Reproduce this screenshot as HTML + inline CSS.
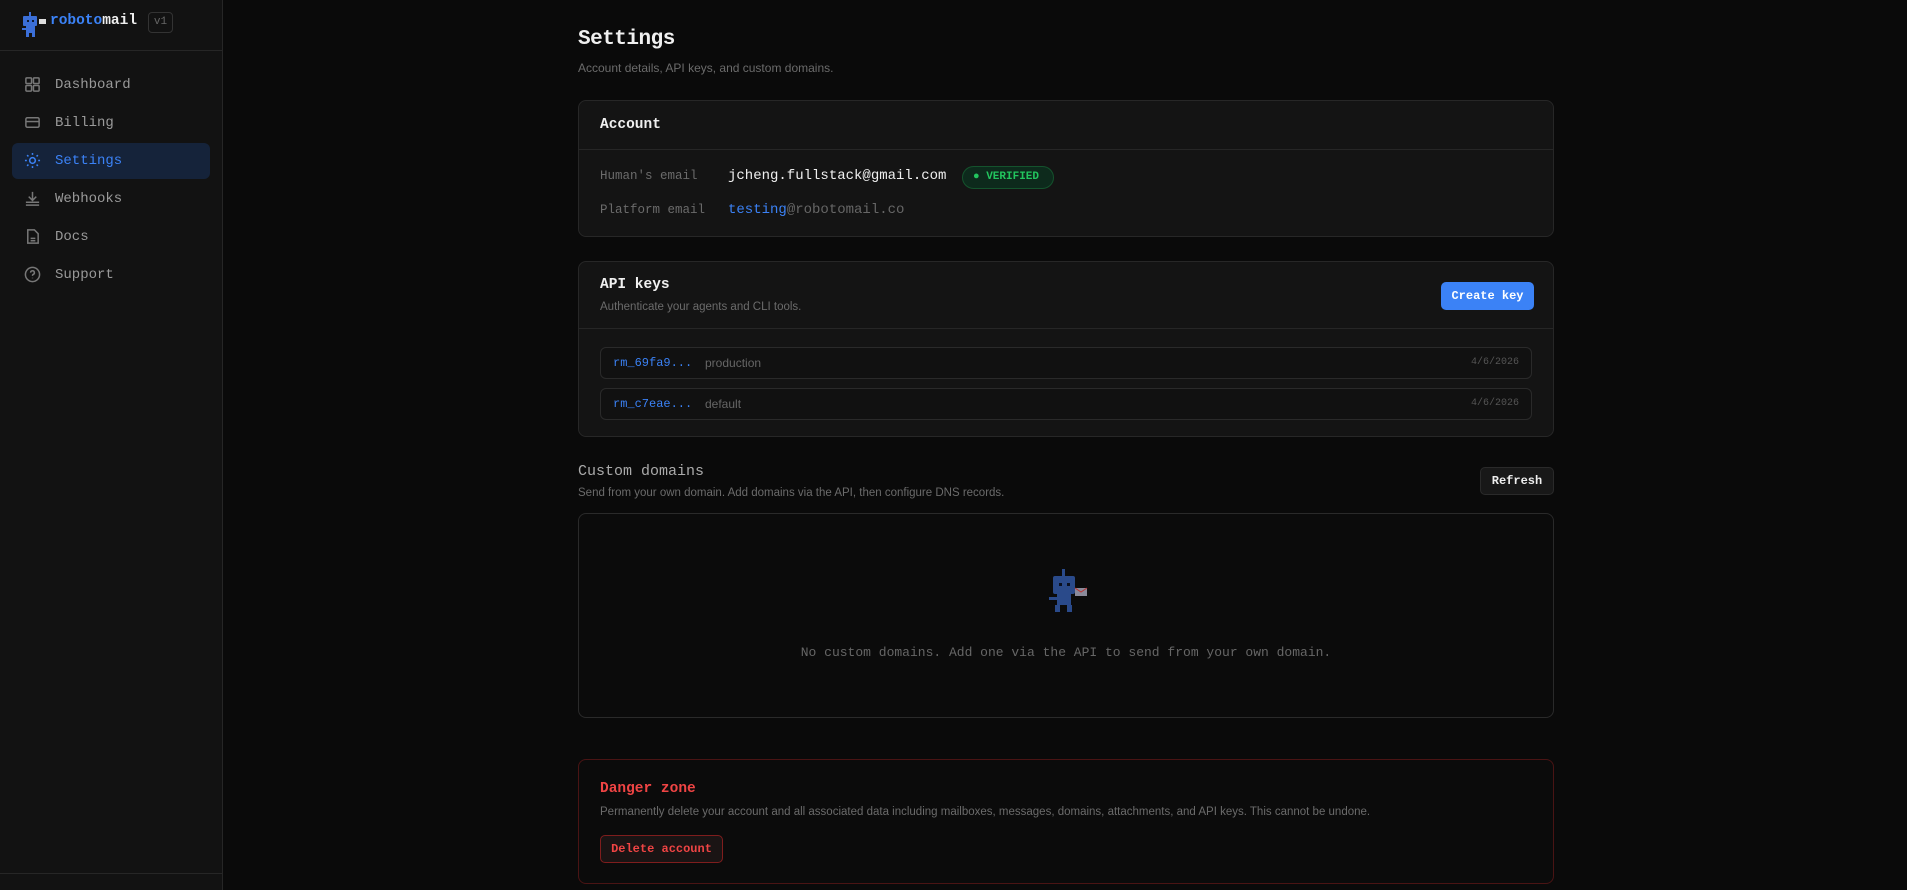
<!DOCTYPE html>
<html><head><meta charset="utf-8"><style>
*{box-sizing:border-box;margin:0;padding:0}
body{width:1907px;height:890px;background:#0a0a0a;font-family:"Liberation Mono",monospace;color:#e5e5e5;position:relative;overflow:hidden}
.a{position:absolute}
.sans{font-family:"Liberation Sans",sans-serif}
#side{left:0;top:0;width:223px;height:890px;background:#121212;border-right:1px solid #262626}
.nav{position:absolute;left:24px;font-size:14px;color:#9a9a9a;display:flex;align-items:center;gap:14px}
.nav svg{width:17px;height:17px}
.card{position:absolute;left:578px;width:976px;background:#141414;border:1px solid #272727;border-radius:8px}
.lbl{font-size:12.5px;color:#6b6b6b}
.row{position:absolute;left:21px;right:21px;height:32px;border:1px solid #2a2a2a;border-radius:6px;background:#111}
</style></head><body>
<div id="side" class="a">
 <svg class="a" style="left:20px;top:12px" width="28" height="26" viewBox="0 0 28 26"><rect x="9" y="0" width="2" height="4" fill="#3b6fd8"/><rect x="3" y="4" width="14" height="10" rx="1" fill="#3b6fd8"/><rect x="7" y="8" width="2" height="2" fill="#0d1a33"/><rect x="12" y="8" width="2" height="2" fill="#0d1a33"/><rect x="6" y="14" width="9" height="7" fill="#3b6fd8"/><rect x="2" y="16" width="4" height="2" fill="#3b6fd8"/><rect x="6" y="21" width="3" height="4" fill="#3b6fd8"/><rect x="12" y="21" width="3" height="4" fill="#3b6fd8"/><rect x="19" y="7" width="7" height="5" fill="#ddd"/></svg>
 <div class="a" style="left:50px;top:13px;font-size:14.5px;font-weight:bold"><span style="color:#3b82f6">roboto</span><span style="color:#eee">mail</span></div>
 <div class="a" style="left:148px;top:12px;width:25px;height:21px;border:1px solid #333;border-radius:4px;font-size:11px;color:#666;text-align:center;line-height:19px">v1</div>
 <div class="a" style="left:0;top:50px;width:223px;height:1px;background:#262626"></div>
 <div class="a" style="left:12px;top:143px;width:198px;height:36px;background:#15233a;border-radius:6px"></div>
 <div class="nav" style="top:76px"><svg viewBox="0 0 18 18" fill="none" stroke="#777" stroke-width="1.6"><rect x="2" y="2" width="6" height="6" rx="1"/><rect x="10" y="2" width="6" height="6" rx="1"/><rect x="2" y="10" width="6" height="6" rx="1"/><rect x="10" y="10" width="6" height="6" rx="1"/></svg>Dashboard</div>
 <div class="nav" style="top:114px"><svg viewBox="0 0 18 18" fill="none" stroke="#777" stroke-width="1.6"><rect x="2" y="4" width="14" height="10" rx="1.5"/><line x1="2" y1="8" x2="16" y2="8"/></svg>Billing</div>
 <div class="nav" style="top:152px;color:#3b82f6"><svg viewBox="0 0 18 18" fill="none" stroke="#3b82f6" stroke-width="1.6"><circle cx="9" cy="9" r="3"/><path d="M9 1v2M9 15v2M1 9h2M15 9h2M3.3 3.3l1.4 1.4M13.3 13.3l1.4 1.4M3.3 14.7l1.4-1.4M13.3 4.7l1.4-1.4"/></svg>Settings</div>
 <div class="nav" style="top:190px"><svg viewBox="0 0 18 18" fill="none" stroke="#777" stroke-width="1.6"><path d="M9 2v9M5 7l4 4 4-4M2 13h14M2 16h14"/></svg>Webhooks</div>
 <div class="nav" style="top:228px"><svg viewBox="0 0 18 18" fill="none" stroke="#777" stroke-width="1.6"><path d="M4 2h7l4 4v10H4z"/><path d="M7 11h5M7 13.5h5"/></svg>Docs</div>
 <div class="nav" style="top:266px"><svg viewBox="0 0 18 18" fill="none" stroke="#777" stroke-width="1.6"><circle cx="9" cy="9" r="7.5"/><path d="M7 7a2 2 0 1 1 2.5 2c-.5.2-.5.8-.5 1.5M9 12.5v.5"/></svg>Support</div>
 <div class="a" style="left:0;top:873px;width:223px;height:1px;background:#262626"></div>
</div>

<div class="a" style="left:578px;top:28px;font-size:21px;font-weight:bold;color:#f0f0f0;letter-spacing:-0.5px">Settings</div>
<div class="a sans" style="left:578px;top:61px;font-size:12px;color:#6b6b6b">Account details, API keys, and custom domains.</div>

<div class="card" style="top:100px;height:137px">
 <div class="a" style="left:21px;top:16px;font-size:14.5px;font-weight:bold;color:#f0f0f0">Account</div>
 <div class="a" style="left:0;right:0;top:48px;height:1px;background:#262626"></div>
 <div class="a lbl" style="left:21px;top:68px">Human's email</div>
 <div class="a" style="left:149px;top:67px;font-size:14px;color:#f0f0f0">jcheng.fullstack@gmail.com</div>
 <div class="a" style="left:383px;top:65px;width:92px;height:23px;border:1px solid #14532d;background:#0d2a1c;border-radius:12px;font-size:11px;color:#22c55e;line-height:21px;padding-left:10px;font-weight:bold">● VERIFIED</div>
 <div class="a lbl" style="left:21px;top:102px">Platform email</div>
 <div class="a" style="left:149px;top:101px;font-size:14px;color:#666"><span style="color:#3b82f6">testing</span>@robotomail.co</div>
</div>

<div class="card" style="top:261px;height:176px">
 <div class="a" style="left:21px;top:15px;font-size:14.5px;font-weight:bold;color:#f0f0f0">API keys</div>
 <div class="a sans" style="left:21px;top:39px;font-size:11.5px;color:#6b6b6b">Authenticate your agents and CLI tools.</div>
 <div class="a" style="left:862px;top:20px;width:93px;height:28px;background:#3b82f6;border-radius:5px;color:#fff;font-size:12px;font-weight:bold;text-align:center;line-height:28px">Create key</div>
 <div class="a" style="left:0;right:0;top:66px;height:1px;background:#262626"></div>
 <div class="row" style="top:85px"><span class="a" style="left:12px;top:8px;font-size:12px;color:#3b82f6">rm_69fa9...</span><span class="a sans" style="left:104px;top:8px;font-size:12px;color:#666">production</span><span class="a" style="right:12px;top:9px;font-size:10px;color:#555">4/6/2026</span></div>
 <div class="row" style="top:126px"><span class="a" style="left:12px;top:8px;font-size:12px;color:#3b82f6">rm_c7eae...</span><span class="a sans" style="left:104px;top:8px;font-size:12px;color:#666">default</span><span class="a" style="right:12px;top:9px;font-size:10px;color:#555">4/6/2026</span></div>
</div>

<div class="a" style="left:578px;top:463px;font-size:15px;color:#aaa">Custom domains</div>
<div class="a sans" style="left:578px;top:487px;font-size:11.5px;color:#6b6b6b">Send from your own domain. Add domains via the API, then configure DNS records.</div>
<div class="a" style="left:1480px;top:467px;width:74px;height:28px;background:#181818;border:1px solid #2a2a2a;border-radius:5px;color:#eee;font-size:12px;font-weight:bold;text-align:center;line-height:26px">Refresh</div>

<div class="a" style="left:578px;top:513px;width:976px;height:205px;border:1px solid #2a2a2a;border-radius:8px;background:#0b0b0b">
 <svg class="a" style="left:466px;top:55px" width="48" height="50" viewBox="0 0 48 50"><rect x="17" y="0" width="3" height="7" fill="#2a4a8a"/><rect x="8" y="7" width="22" height="18" rx="2" fill="#2a4a8a"/><rect x="14" y="14" width="3" height="3" fill="#0a1020"/><rect x="22" y="14" width="3" height="3" fill="#0a1020"/><rect x="12" y="25" width="14" height="11" fill="#2a4a8a"/><rect x="4" y="28" width="8" height="3" fill="#2a4a8a"/><rect x="10" y="36" width="5" height="7" fill="#2a4a8a"/><rect x="22" y="36" width="5" height="7" fill="#2a4a8a"/><rect x="30" y="19" width="12" height="8" fill="#8a8a9a"/><path d="M30 19l6 4 6-4" stroke="#b33" fill="none"/></svg>
 <div class="a" style="left:0;right:0;top:131px;text-align:center;font-size:13px;color:#666">No custom domains. Add one via the API to send from your own domain.</div>
</div>

<div class="a" style="left:578px;top:759px;width:976px;height:125px;border:1px solid #4a1414;border-radius:8px;background:#0b0b0b">
 <div class="a" style="left:21px;top:21px;font-size:14.5px;font-weight:bold;color:#ef4444">Danger zone</div>
 <div class="a sans" style="left:21px;top:46px;font-size:11.5px;color:#6b6b6b">Permanently delete your account and all associated data including mailboxes, messages, domains, attachments, and API keys. This cannot be undone.</div>
 <div class="a" style="left:21px;top:75px;width:123px;height:28px;border:1px solid #7f1d1d;background:#1a1414;border-radius:5px;color:#ef4444;font-size:12px;font-weight:bold;text-align:center;line-height:26px">Delete account</div>
</div>
</body></html>
